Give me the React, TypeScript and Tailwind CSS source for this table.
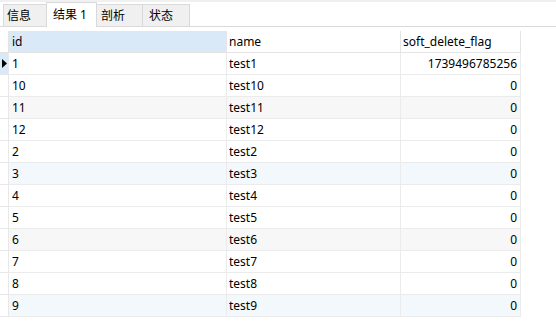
import React from "react";

const rows: { id: string; name: string; flag: string; bg: string }[] = [
  { id: "1", name: "test1", flag: "1739496785256", bg: "bg-white" },
  { id: "10", name: "test10", flag: "0", bg: "bg-white" },
  { id: "11", name: "test11", flag: "0", bg: "bg-[#f7f7f7]" },
  { id: "12", name: "test12", flag: "0", bg: "bg-white" },
  { id: "2", name: "test2", flag: "0", bg: "bg-white" },
  { id: "3", name: "test3", flag: "0", bg: "bg-[#f3f8fd]" },
  { id: "4", name: "test4", flag: "0", bg: "bg-white" },
  { id: "5", name: "test5", flag: "0", bg: "bg-white" },
  { id: "6", name: "test6", flag: "0", bg: "bg-[#f7f7f7]" },
  { id: "7", name: "test7", flag: "0", bg: "bg-white" },
  { id: "8", name: "test8", flag: "0", bg: "bg-white" },
  { id: "9", name: "test9", flag: "0", bg: "bg-[#f3f8fd]" },
];

export default function App() {
  return (
    <div
      className="w-[556px] h-[323px] bg-white text-black text-[12px] overflow-hidden"
      style={{ fontFamily: '"Noto Sans", "Noto Sans CJK SC", sans-serif' }}
    >
      {/* Tab strip */}
      <div className="h-[27px] border-t-2 border-t-[#f0f0f0] border-b border-b-[#dadada] flex items-end pl-[3px]">
        <div className="h-[22px] w-[43px] bg-[#f0f0f0] border-l border-t border-[#d9d9d9] flex items-center pl-[3px] leading-none">
          信息
        </div>
        <div className="h-[25px] w-[51px] -mb-px bg-white border-l border-t border-r border-[#d9d9d9] flex items-center pl-[6px] leading-none">
          结果 1
        </div>
        <div className="h-[22px] w-[46px] bg-[#f0f0f0] border-t border-r border-[#d9d9d9] flex items-center pl-[4px] leading-none">
          剖析
        </div>
        <div className="h-[22px] w-[47px] bg-[#f0f0f0] border-t border-r border-[#d9d9d9] flex items-center pl-[6px] leading-none">
          状态
        </div>
      </div>

      {/* Grid */}
      <div className="mt-[4px] flex flex-col">
        {/* Header */}
        <div className="flex h-[22px]">
          <div className="w-[9px] border-r border-b border-[#e4e4e4] bg-white" />
          <div className="w-[218px] border-r border-b border-[#e4e4e4] bg-[#d9e9f8] flex items-center pl-[3px]">
            id
          </div>
          <div className="w-[174px] border-r border-b border-[#e4e4e4] bg-white flex items-center pl-[2px]">
            name
          </div>
          <div className="w-[120px] border-r border-b border-[#e4e4e4] bg-white flex items-center pl-[2px]">
            soft_delete_flag
          </div>
        </div>
        {rows.map((r, i) => (
          <div key={r.id} className="flex h-[22px]">
            <div
              className={
                "w-[9px] border-r border-b border-[#e8e8e8] flex items-center justify-start pl-[2px] " +
                (i === 0 ? "bg-[#d9e9f8]" : "bg-white")
              }
            >
              {i === 0 && (
                <svg width="5" height="9" viewBox="0 0 5 9">
                  <polygon points="0,0 5,4.5 0,9" fill="#000" />
                </svg>
              )}
            </div>
            <div className={"w-[218px] border-r border-b border-[#ebebeb] flex items-center pl-[3px] " + r.bg}>
              {r.id}
            </div>
            <div className={"w-[174px] border-r border-b border-[#ebebeb] flex items-center pl-[2px] " + r.bg}>
              {r.name}
            </div>
            <div className={"w-[120px] border-r border-b border-[#ebebeb] flex items-center justify-end pr-[3px] " + r.bg}>
              {r.flag}
            </div>
          </div>
        ))}
      </div>
    </div>
  );
}
